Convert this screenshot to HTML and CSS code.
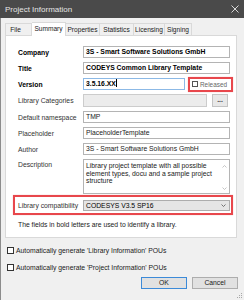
FILE: index.html
```html
<!DOCTYPE html>
<html>
<head>
<meta charset="utf-8">
<link rel="stylesheet" href="styles.css">
</head>
<body>
<div class="window">
  <div class="titlebar">
    <span class="title">Project Information</span>
    <svg class="close" width="8" height="8" viewBox="0 0 8 8"><path d="M0.5 0.5 L7.5 7.5 M7.5 0.5 L0.5 7.5" stroke="#d8d8d8" stroke-width="1"/></svg>
  </div>
  <div class="body">
    <div class="tabs">
      <div class="tab t-file">File</div>
      <div class="tab t-summary active">Summary</div>
      <div class="tab t-props">Properties</div>
      <div class="tab t-stats">Statistics</div>
      <div class="tab t-lic">Licensing</div>
      <div class="tab t-sign">Signing</div>
    </div>
    <div class="panel">
      <div class="row">
        <span class="label bold">Company</span>
        <div class="input bold">3S - Smart Software Solutions GmbH</div>
      </div>
      <div class="row">
        <span class="label bold">Title</span>
        <div class="input bold">CODEYS Common Library Template</div>
      </div>
      <div class="row">
        <span class="label bold">Version</span>
        <div class="input focus bold">3.5.16.XX<span class="caret"></span></div>
        <div class="highlight released"><span class="cb"></span><span class="cb-text">Released</span></div>
      </div>
      <div class="row tall">
        <span class="label">Library Categories</span>
        <div class="input disabled"></div>
        <div class="dots">...</div>
      </div>
      <div class="row">
        <span class="label">Default namespace</span>
        <div class="input">TMP</div>
      </div>
      <div class="row">
        <span class="label">Placeholder</span>
        <div class="input">PlaceholderTemplate</div>
      </div>
      <div class="row">
        <span class="label">Author</span>
        <div class="input">3S - Smart Software Solutions GmbH</div>
      </div>
      <div class="row desc-row">
        <span class="label">Description</span>
        <div class="input textarea">
          <div class="desc-text">Library project template with all possible element types, docu and a sample project structure</div>
          <div class="scroll">
            <svg width="5" height="3" viewBox="0 0 5 3"><path d="M0.5 2.5 L2.5 0.5 L4.5 2.5" fill="none" stroke="#b8b8b8" stroke-width="0.8"/></svg>
            <svg width="5" height="3" viewBox="0 0 5 3"><path d="M0.5 0.5 L2.5 2.5 L4.5 0.5" fill="none" stroke="#b8b8b8" stroke-width="0.8"/></svg>
          </div>
        </div>
      </div>
      <div class="highlight compat">
        <span class="label">Library compatibility</span>
        <div class="combo"><span>CODESYS V3.5 SP16</span>
          <svg width="5" height="3" viewBox="0 0 5 3"><path d="M0.5 0.5 L2.5 2.5 L4.5 0.5" fill="none" stroke="#555" stroke-width="0.8"/></svg>
        </div>
      </div>
      <p class="note">The fields in bold letters are used to identify a library.</p>
    </div>
    <div class="check"><span class="cb"></span>Automatically generate 'Library Information' POUs</div>
    <div class="check"><span class="cb"></span>Automatically generate 'Project Information' POUs</div>
    <div class="buttons">
      <div class="btn default">OK</div>
      <div class="btn">Cancel</div>
    </div>
    <svg class="grip" width="5" height="5" viewBox="0 0 5 5"><g fill="#a8a8a8"><rect x="4" y="0" width="1" height="1"/><rect x="2" y="2" width="1" height="1"/><rect x="4" y="2" width="1" height="1"/><rect x="0" y="4" width="1" height="1"/><rect x="2" y="4" width="1" height="1"/><rect x="4" y="4" width="1" height="1"/></g></svg>
  </div>
</div>
</body>
</html>
```

FILE: styles.css
```css
* { box-sizing: border-box; }
html, body { margin: 0; padding: 0; background: #f0f0f0; }
body {
  font-family: "Liberation Sans", Arial, sans-serif;
  font-size: 6.8px;
  color: #1a1a1a;
}
.window {
  width: 244px;
  height: 300px;
  background: #f0f0f0;
  border-left: 1px solid #8c8c8c;
  display: flex;
  flex-direction: column;
}
.titlebar {
  height: 18px;
  background: #4a4a4a;
  display: flex;
  align-items: center;
  justify-content: space-between;
  padding: 0 5px 0 5px;
  margin-left: -1px;
}
.title { color: #e4e4e4; font-size: 8px; }
.close { display: block; }
.body {
  position: relative;
  flex: 1;
  padding: 4px 0 0 4px;
}
.tabs {
  display: flex;
  height: 13px;
  align-items: flex-end;
  position: relative;
  z-index: 1;
  font-size: 6.6px;
}
.tab {
  height: 12px;
  line-height: 11px;
  padding: 0;
  text-align: center;
  border: 1px solid #d9d9d9;
  border-bottom: none;
  border-left: none;
  background: #f0f0f0;
  white-space: nowrap;
}
.t-file { border-left: 1px solid #d9d9d9; width: 27px; padding-right: 6px; }
.t-summary { width: 34px; }
.t-props { width: 34px; }
.t-stats { width: 34px; }
.t-lic { width: 31px; }
.t-sign { width: 27px; }
.tab.active {
  height: 14px;
  margin-bottom: -1px;
  background: #fff;
  line-height: 12px;
}
.panel {
  width: 232px;
  height: 203px;
  background: #fff;
  border: 1px solid #d9d9d9;
  padding: 10px 6px 0 12px;
}
.row {
  display: flex;
  align-items: center;
  height: 12px;
  margin-bottom: 4px;
}
.row.tall { height: 13px; }
.label { width: 65px; flex: none; white-space: nowrap; color: #333; }
.bold { font-weight: bold; color: #000; }
.input {
  flex: 1;
  height: 12px;
  border: 1px solid #b4b4b4;
  background: #fff;
  padding: 0 2px;
  line-height: 10px;
  white-space: nowrap;
  overflow: hidden;
}
.input.focus { border-color: #8cb9e6; }
.caret { display: inline-block; width: 1px; height: 8px; background: #000; vertical-align: -1px; }
.input.disabled { height: 13px; background: #ececec; border-color: #cccccc; }
.dots {
  width: 16px;
  height: 13px;
  margin-left: 5px;
  margin-right: 2px;
  border: 1px solid #c4c4c4;
  background: #e8e8e8;
  text-align: center;
  line-height: 9px;
  font-weight: bold;
  color: #333;
}
.highlight {
  border: 2px solid #e8474c;
  box-shadow: 0 0 1px rgba(200,0,0,0.3);
}
.released {
  width: 45px;
  height: 15px;
  margin-left: 3px;
  margin-right: -3px;
  display: flex;
  align-items: center;
  padding-left: 2px;
  flex: none;
  white-space: nowrap;
  overflow: hidden;
}
.cb {
  display: inline-block;
  width: 7px;
  height: 7px;
  border: 1px solid #333;
  background: #fff;
  flex: none;
}
.released .cb { width: 6px; height: 6px; border-color: #555; }
.cb-text { margin-left: 2px; color: #666; font-size: 6.4px; }
.desc-row { height: 35px; align-items: flex-start; margin-bottom: 0; }
.desc-row .label { margin-top: 2px; }
.textarea {
  height: 35px;
  display: flex;
  padding: 1px 0 0 2px;
  line-height: 7.5px;
  white-space: normal;
}
.desc-text { flex: 1; padding-top: 1px; }
.scroll {
  width: 10px;
  flex: none;
  display: flex;
  flex-direction: column;
  justify-content: space-between;
  align-items: center;
  padding: 4px 0 3px;
}
.scroll svg { display: block; }
.compat {
  display: flex;
  align-items: center;
  height: 20px;
  margin: 1px -3px 0 -5px;
  padding: 0 1px 0 3px;
}
.combo {
  flex: 1;
  height: 11px;
  background: #e5e5e5;
  border: 1px solid #adadad;
  display: flex;
  align-items: center;
  justify-content: space-between;
  padding: 0 3px 0 2px;
  color: #000;
}
.combo svg { display: block; }
.note { margin: 6px 0 0; line-height: 8px; }
.check {
  display: flex;
  align-items: center;
  height: 8px;
  margin: 8px 0 0 2px;
  color: #1a1a1a;
}
.check + .check { margin-top: 9px; }
.check .cb { margin-right: 2px; border-color: #333; }
.buttons {
  display: flex;
  justify-content: flex-end;
  gap: 5px;
  margin-top: 6px;
  width: 233px;
}
.btn {
  width: 46px;
  height: 12px;
  border: 1px solid #adadad;
  background: #e1e1e1;
  text-align: center;
  line-height: 10px;
}
.btn.default { border-color: #3c8ad8; }
.grip { position: absolute; right: 2px; bottom: 2px; }
```
